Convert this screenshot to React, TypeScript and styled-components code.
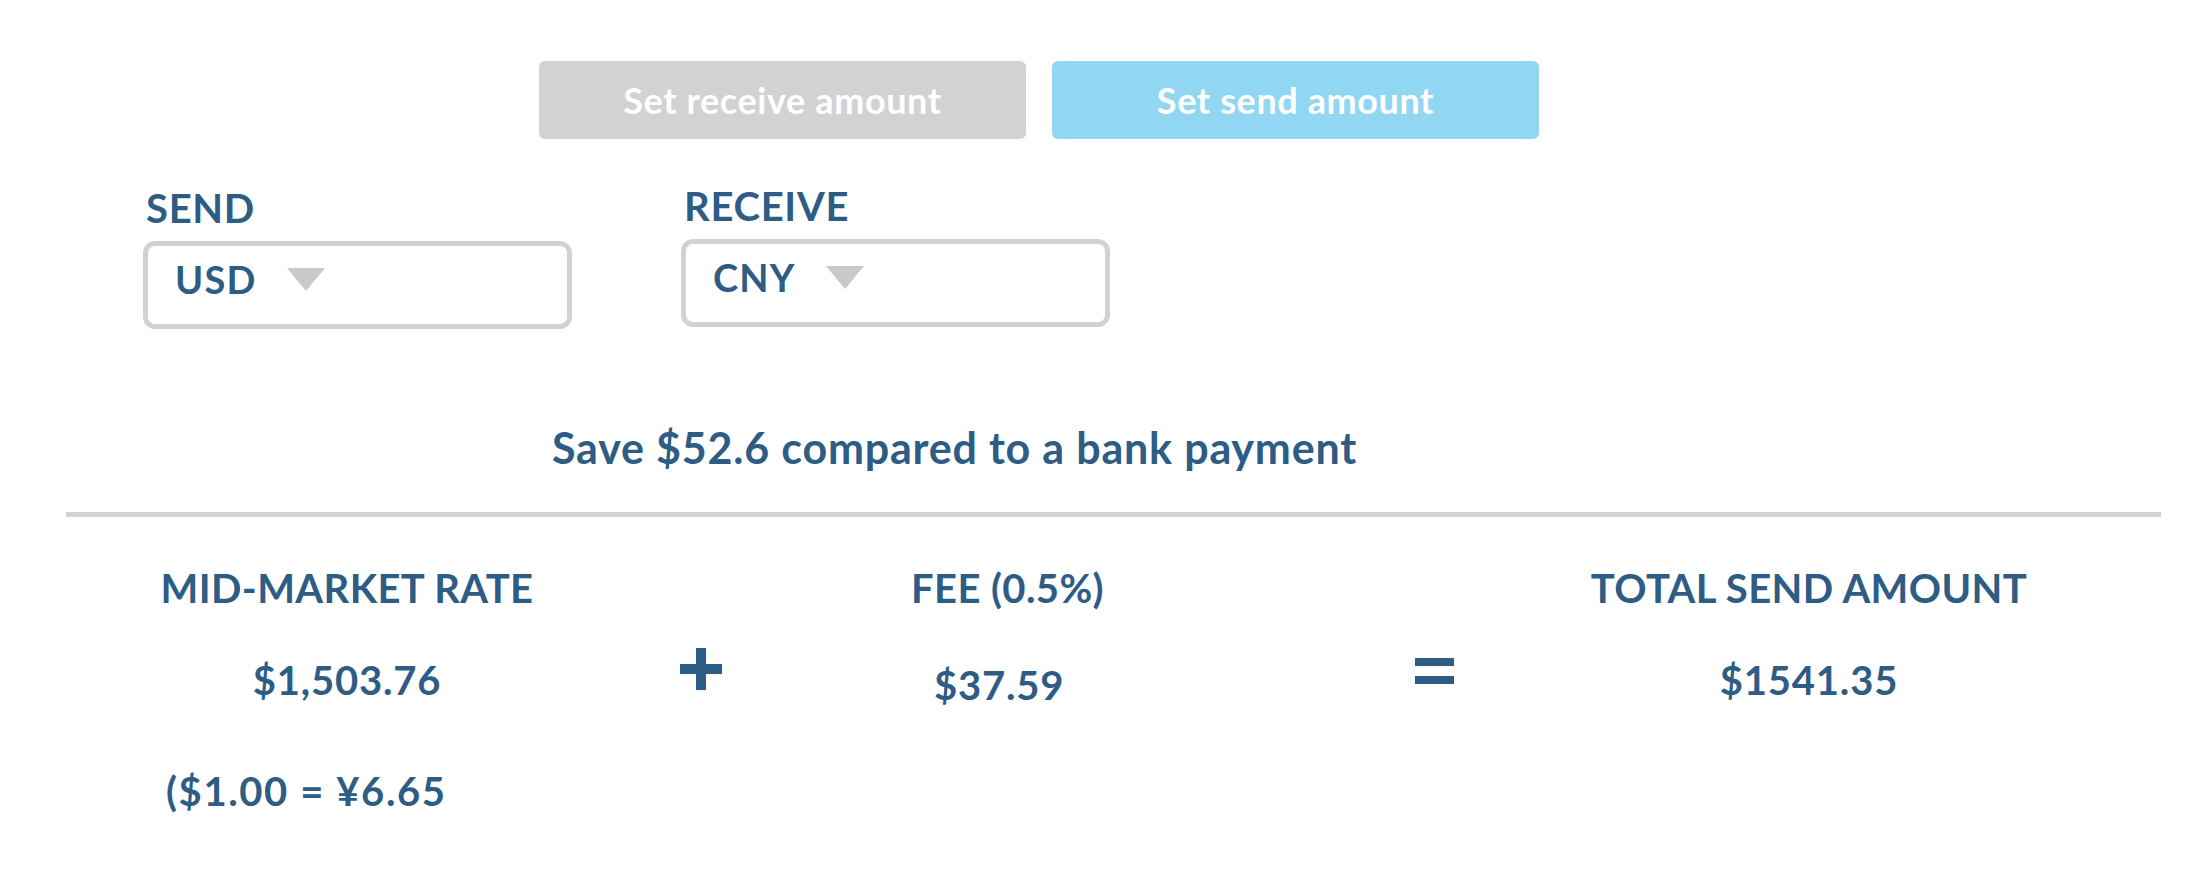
import React from "react";
import styled, { createGlobalStyle } from "styled-components";

const Global = createGlobalStyle`
  html, body { margin: 0; padding: 0; background: #ffffff; }
  body { font-family: Lato, "Open Sans", "Liberation Sans", sans-serif; color: #2d5c85; }
  * { box-sizing: border-box; }
`;

const Page = styled.div`
  width: 2210px;
  height: 872px;
  overflow: hidden;
  display: flex;
  flex-direction: column;
`;

const ButtonRow = styled.div`
  display: flex;
  gap: 26px;
  padding: 61px 0 0 539px;
`;

const ModeButton = styled.button<{ $active?: boolean }>`
  width: 487px;
  height: 78px;
  border: none;
  border-radius: 6px;
  background: ${(p) => (p.$active ? "#91d6f3" : "#d1d2d4")};
  color: #ffffff;
  font-family: Lato, "Open Sans", sans-serif;
  font-weight: 700;
  font-size: 36px;
  letter-spacing: 0.6px;
  display: flex;
  align-items: center;
  justify-content: center;
  padding: 0;
`;

const CurrencyRow = styled.div`
  display: flex;
  gap: 109px;
  padding-left: 143px;
  margin-top: 45px;
`;

const Field = styled.div<{ $raise?: number }>`
  display: flex;
  flex-direction: column;
  gap: 9px;
  width: 429px;
  margin-top: ${(p) => -(p.$raise ?? 0)}px;
`;

const FieldLabel = styled.div`
  font-size: 40px;
  font-weight: 700;
  line-height: 1.2;
  letter-spacing: 0.7px;
  padding-left: 3px;
`;

const Select = styled.div`
  height: 88px;
  border: 5px solid #d2d2d2;
  border-radius: 12px;
  display: flex;
  align-items: flex-start;
  gap: 30px;
  padding: 11px 0 0 27px;
`;

const SelectValue = styled.span`
  font-size: 38px;
  font-weight: 700;
  line-height: 1.2;
  letter-spacing: 1.2px;
`;

const Caret = styled.span`
  width: 0;
  height: 0;
  margin-top: 11px;
  border-left: 19.5px solid transparent;
  border-right: 19.5px solid transparent;
  border-top: 23px solid #c9c9c9;
`;

const Savings = styled.div`
  margin-top: 93px;
  padding-left: 552px;
  font-size: 43px;
  font-weight: 700;
  line-height: 1.2;
  letter-spacing: 0.8px;
`;

const Divider = styled.hr`
  margin: 38px 49px 0 66px;
  border: none;
  height: 5px;
  background: #d3d3d3;
`;

const Summary = styled.div`
  display: flex;
  align-items: flex-start;
  padding-left: 163px;
  margin-top: 47px;
`;

const Column = styled.div<{ $width: number; $align: "center" | "flex-start"; $ml?: number }>`
  display: flex;
  flex-direction: column;
  align-items: ${(p) => p.$align};
  width: ${(p) => p.$width}px;
  margin-left: ${(p) => p.$ml ?? 0}px;
`;

const Heading = styled.div`
  font-size: 40px;
  font-weight: 700;
  line-height: 1.2;
  letter-spacing: 0.4px;
  white-space: nowrap;
`;

const Amount = styled.div<{ $mt: number; $ml?: number }>`
  font-size: 40px;
  font-weight: 700;
  line-height: 1.2;
  letter-spacing: 0.8px;
  margin-top: ${(p) => p.$mt}px;
  margin-left: ${(p) => p.$ml ?? 0}px;
  white-space: nowrap;
`;

const RateNote = styled(Amount)`
  align-self: flex-start;
  letter-spacing: 1.6px;
`;

const Operator = styled.svg<{ $mt: number; $ml: number }>`
  flex: none;
  margin-top: ${(p) => p.$mt}px;
  margin-left: ${(p) => p.$ml}px;
  fill: #2d5c85;
`;

export default function App() {
  return (
    <Page>
      <Global />
      <ButtonRow>
        <ModeButton>Set receive amount</ModeButton>
        <ModeButton $active>Set send amount</ModeButton>
      </ButtonRow>

      <CurrencyRow>
        <Field>
          <FieldLabel>SEND</FieldLabel>
          <Select>
            <SelectValue>USD</SelectValue>
            <Caret />
          </Select>
        </Field>
        <Field $raise={2}>
          <FieldLabel>RECEIVE</FieldLabel>
          <Select>
            <SelectValue>CNY</SelectValue>
            <Caret />
          </Select>
        </Field>
      </CurrencyRow>

      <Savings>Save $52.6 compared to a bank payment</Savings>
      <Divider />

      <Summary>
        <Column $width={368} $align="center">
          <Heading>MID-MARKET RATE</Heading>
          <Amount $mt={44}>$1,503.76</Amount>
          <RateNote $mt={63} $ml={3}>($1.00 = ¥6.65</RateNote>
        </Column>
        <Operator $mt={84} $ml={149} width="42" height="42" viewBox="0 0 42 42">
          <rect x="16" y="0" width="10" height="42" />
          <rect x="0" y="16" width="42" height="10" />
        </Operator>
        <Column $width={260} $align="flex-start" $ml={189}>
          <Heading>FEE (0.5%)</Heading>
          <Amount $mt={49} $ml={23}>$37.59</Amount>
        </Column>
        <Operator $mt={94} $ml={244} width="39" height="26" viewBox="0 0 39 26">
          <rect x="0" y="0" width="39" height="8" />
          <rect x="0" y="18" width="39" height="8" />
        </Operator>
        <Column $width={442} $align="center" $ml={134}>
          <Heading>TOTAL SEND AMOUNT</Heading>
          <Amount $mt={44}>$1541.35</Amount>
        </Column>
      </Summary>
    </Page>
  );
}
